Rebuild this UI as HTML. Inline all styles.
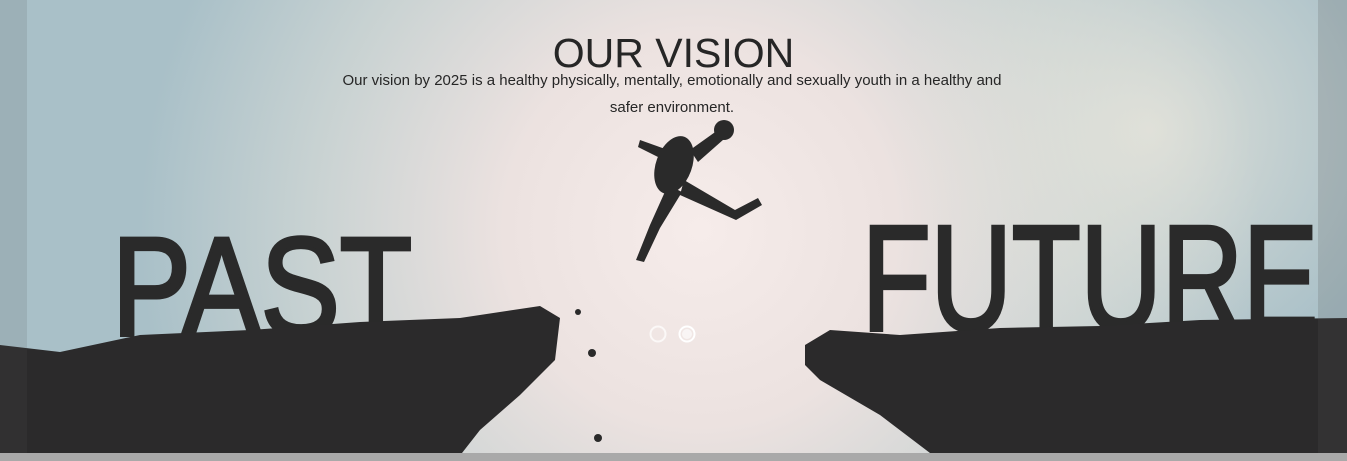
<!DOCTYPE html>
<html><head><meta charset="utf-8"><style>
html,body{margin:0;padding:0;width:1347px;height:461px;overflow:hidden;background:#a9a9a9;font-family:"Liberation Sans",sans-serif}
#s{position:absolute;left:0;top:0;width:1347px;height:453px}
</style></head><body>
<svg id="s" width="1347" height="453" viewBox="0 0 1347 453">
<defs>
<radialGradient id="sun" cx="700" cy="230" r="560" gradientUnits="userSpaceOnUse">
<stop offset="0" stop-color="#f6ecea"/><stop offset="0.35" stop-color="#ece2e0"/><stop offset="0.7" stop-color="#c8d2d2"/><stop offset="1" stop-color="#a9c0c8"/></radialGradient>
<radialGradient id="cl" cx="1150" cy="130" r="260" gradientUnits="userSpaceOnUse">
<stop offset="0" stop-color="#e9e6dc" stop-opacity="0.8"/><stop offset="1" stop-color="#e9e6dc" stop-opacity="0"/></radialGradient>
</defs>
<rect width="1347" height="453" fill="url(#sun)"/>
<rect width="1347" height="453" fill="url(#cl)"/>
<text x="112" y="335" font-size="140" fill="#2a2a2a" stroke="#2a2a2a" stroke-width="4" textLength="300" lengthAdjust="spacingAndGlyphs">PAST</text>
<text x="862" y="330" font-size="150" fill="#2a2a2a" stroke="#2a2a2a" stroke-width="4" textLength="456" lengthAdjust="spacingAndGlyphs">FUTURE</text>
<path d="M0 345 L60 352 L140 335 L250 330 L360 322 L460 318 L540 306 L560 318 L555 360 L520 395 L480 430 L462 453 L0 453Z" fill="#2b2a2b"/>
<path d="M805 345 L830 330 L900 335 L1000 328 L1100 326 L1200 320 L1347 318 L1347 453 L930 453 L880 415 L820 380 L805 365Z" fill="#2b2a2b"/>
<g fill="#2a2a2a">
<ellipse cx="674" cy="165" rx="18" ry="30" transform="rotate(20 674 165)"/>
<circle cx="724" cy="130" r="10"/>
<path d="M690 150 L725 125 L732 132 L698 162Z"/>
<path d="M668 150 L640 140 L638 147 L664 160Z"/>
<path d="M668 185 L650 225 L636 260 L644 262 L660 228 L682 192Z"/>
<path d="M684 180 L735 210 L758 198 L762 205 L736 220 L680 195Z"/>
<circle cx="578" cy="312" r="3"/><circle cx="592" cy="353" r="4"/><circle cx="598" cy="438" r="4"/>
</g>
<circle cx="658" cy="334" r="7.5" fill="none" stroke="#fff" stroke-opacity="0.7" stroke-width="2"/>
<circle cx="687" cy="334" r="7.5" fill="none" stroke="#fff" stroke-width="2"/>
<circle cx="687" cy="334" r="5" fill="#fff" fill-opacity="0.6"/>
<rect x="0" y="0" width="27" height="453" fill="#555" fill-opacity="0.15"/>
<rect x="1318" y="0" width="29" height="453" fill="#555" fill-opacity="0.2"/>
</svg>
<div style="position:absolute;left:0;top:29px;width:1347px;text-align:center;font-size:41px;color:#262626;line-height:48px">OUR VISION</div>
<div style="position:absolute;left:337px;top:67px;width:670px;text-align:center;font-size:15px;color:#262626;line-height:27px">Our vision by 2025 is a healthy physically, mentally, emotionally and sexually youth in a healthy and safer environment.</div>
</body></html>
